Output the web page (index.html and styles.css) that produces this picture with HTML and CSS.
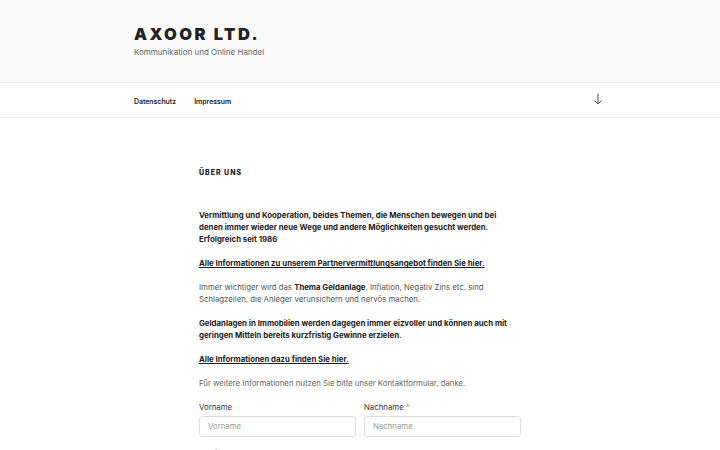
FILE: index.html
```html
<!DOCTYPE html>
<html lang="de">
<head>
<meta charset="utf-8">
<title>Über uns – AXOOR LTD.</title>
<link rel="stylesheet" href="styles.css">
</head>
<body>
<header class="masthead">
  <div class="wrap branding">
    <h1 class="site-title">AXOOR LTD.</h1>
    <p class="site-desc">Kommunikation und Online Handel</p>
  </div>
</header>
<nav class="topnav">
  <div class="wrap nav-inner">
    <ul class="menu">
      <li><a href="#">Datenschutz</a></li>
      <li><a href="#">Impressum</a></li>
    </ul>
    <a class="scroll-down" href="#content" aria-label="Nach unten scrollen">
      <svg width="10" height="12" viewBox="0 0 10 12" fill="none" stroke="#555" stroke-width="1">
        <path d="M5 0.5V11"/>
        <path d="M1.5 7.5L5 11L8.5 7.5"/>
      </svg>
    </a>
  </div>
</nav>
<main id="content" class="content">
  <h2 class="page-title">Über uns</h2>
  <div class="entry">
    <p class="strong">Vermittlung und Kooperation, beides Themen, die Menschen bewegen und bei denen immer wieder neue Wege und andere Möglichkeiten gesucht werden. Erfolgreich seit 1986</p>
    <p class="strong"><a href="#">Alle Informationen zu unserem Partnervermittlungsangebot finden Sie hier.</a></p>
    <p>Immer wichtiger wird das <b>Thema Geldanlage</b>. Inflation, Negativ Zins etc. sind Schlagzeilen, die Anleger verunsichern und nervös machen.</p>
    <p class="strong">Geldanlagen in Immobilien werden dagegen immer eizvoller und können auch mit geringen Mitteln bereits kurzfristig Gewinne erzielen.</p>
    <p class="strong"><a href="#">Alle Informationen dazu finden Sie hier.</a></p>
    <p class="muted">Für weitere Informationen nutzen Sie bitte unser Kontaktformular, danke.</p>
    <form class="form">
      <div class="row">
        <div class="field">
          <label class="lbl">Vorname</label>
          <input class="inp" type="text" placeholder="Vorname">
        </div>
        <div class="field">
          <label class="lbl">Nachname <span class="req">*</span></label>
          <input class="inp" type="text" placeholder="Nachname">
        </div>
      </div>
      <div class="field">
        <label class="lbl">Email <span class="req">*</span></label>
        <input class="inp" type="email" placeholder="Email">
      </div>
    </form>
  </div>
</main>
</body>
</html>
```
FILE: styles.css
```css
* { box-sizing: border-box; }
html, body { margin: 0; padding: 0; }
body {
  font-family: Inter, "Liberation Sans", sans-serif;
  color: #333;
  background: #fff;
}
.wrap {
  max-width: 500px;
  margin: 0 auto;
  padding: 0 24px;
}
.masthead {
  background: #fafafa;
  height: 83px;
  border-bottom: 1px solid #eee;
}
.branding { padding-top: 24px; }
.site-title {
  margin: 0;
  font-size: 16.5px;
  line-height: 20px;
  font-weight: 900;
  letter-spacing: 0.15em;
  color: #222;
  text-transform: uppercase;
}
.site-desc {
  margin: 2px 0 0;
  font-size: 8px;
  line-height: 12px;
  color: #666;
}
.topnav {
  height: 35px;
  border-bottom: 1px solid #eee;
}
.nav-inner {
  display: flex;
  align-items: center;
  height: 34px;
}
.menu {
  list-style: none;
  margin: 0;
  padding: 0 0 4px;
  display: flex;
  gap: 18px;
  flex: 1;
}
.menu a {
  font-size: 6.9px;
  font-weight: 600;
  color: #222;
  text-decoration: none;
}
.scroll-down {
  display: flex;
  margin-right: -17px;
  margin-bottom: 2px;
}
.content {
  width: 322px;
  margin: 0 auto;
  padding-top: 49px;
}
.page-title {
  margin: 0 0 30px;
  font-size: 7px;
  line-height: 12px;
  font-weight: 800;
  letter-spacing: 0.14em;
  text-transform: uppercase;
  color: #222;
}
.entry p {
  margin: 0 0 11.6px;
  font-size: 7.8px;
  line-height: 12.2px;
  color: #555;
}
.entry p.strong { font-weight: 700; color: #222; }
.entry p b { font-weight: 700; color: #222; }
.entry p.muted { color: #666; }
.entry a { color: #222; text-decoration: underline; text-underline-offset: 1px; }
.form { display: flex; flex-direction: column; gap: 10px; }
.row { display: flex; gap: 8px; }
.field { flex: 1; display: flex; flex-direction: column; }
.lbl {
  font-size: 7.8px;
  line-height: 12px;
  color: #333;
  margin-bottom: 3px;
}
.req { color: #e88; }
.inp {
  height: 21px;
  border: 1px solid #ddd;
  border-radius: 3px;
  padding: 0 8px;
  font-family: inherit;
  font-size: 7.8px;
  color: #333;
  background: #fff;
}
.inp::placeholder { color: #999; }
```
